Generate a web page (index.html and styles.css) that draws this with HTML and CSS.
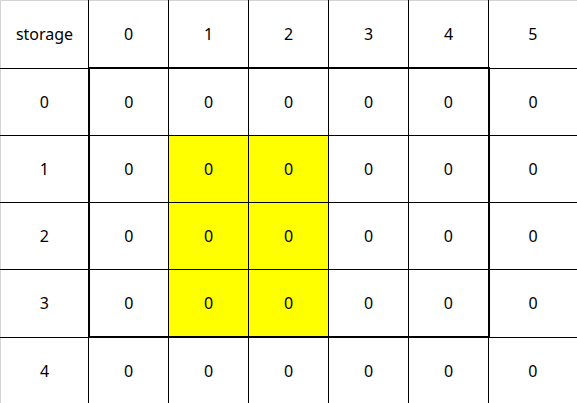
FILE: index.html
```html
<!DOCTYPE html>
<html>
<head>
<meta charset="utf-8">
<link rel="stylesheet" href="styles.css">
</head>
<body>
<table class="grid">
  <colgroup>
    <col class="c-head">
    <col class="c"><col class="c"><col class="c"><col class="c"><col class="c">
    <col class="c-last">
  </colgroup>
  <tr class="first">
    <td class="lead">storage</td><td>0</td><td>1</td><td>2</td><td>3</td><td>4</td><td class="last">5</td>
  </tr>
  <tr>
    <td class="lead">0</td><td class="t l">0</td><td class="t">0</td><td class="t">0</td><td class="t">0</td><td class="t r">0</td><td class="last">0</td>
  </tr>
  <tr>
    <td class="lead">1</td><td class="l">0</td><td class="hl">0</td><td class="hl">0</td><td>0</td><td class="r">0</td><td class="last">0</td>
  </tr>
  <tr>
    <td class="lead">2</td><td class="l">0</td><td class="hl">0</td><td class="hl">0</td><td>0</td><td class="r">0</td><td class="last">0</td>
  </tr>
  <tr>
    <td class="lead">3</td><td class="b l">0</td><td class="b hl">0</td><td class="b hl">0</td><td class="b">0</td><td class="b r">0</td><td class="last">0</td>
  </tr>
  <tr class="final">
    <td class="lead">4</td><td>0</td><td>0</td><td>0</td><td>0</td><td>0</td><td class="last">0</td>
  </tr>
</table>
</body>
</html>
```
FILE: styles.css
```css
html, body {
  margin: 0;
  padding: 0;
  background: #fff;
}
body {
  font-family: "Noto Sans", "Open Sans", sans-serif;
  font-size: 16px;
  color: #000;
}
.grid {
  border-collapse: collapse;
  table-layout: fixed;
  width: 577px;
}
.c-head { width: 88px; }
.c { width: 80px; }
.c-last { width: 89px; }
.grid td {
  border: 1px solid #000;
  height: 66px;
  padding: 0;
  text-align: center;
  vertical-align: middle;
}
.grid td.lead { border-left: 1px solid #d3d3d3; }
.grid tr.first td { border-top: 1px solid #d3d3d3; }
.grid td.last { border-right: 2px solid #000; }
.grid tr.final td { border-bottom: 2px solid #000; }
.grid td.t { border-top: 2px solid #000; }
.grid td.b { border-bottom: 2px solid #000; }
.grid td.l { border-left: 2px solid #000; }
.grid td.r { border-right: 2px solid #000; }
.grid td.hl { background: #ffff00; }
```
